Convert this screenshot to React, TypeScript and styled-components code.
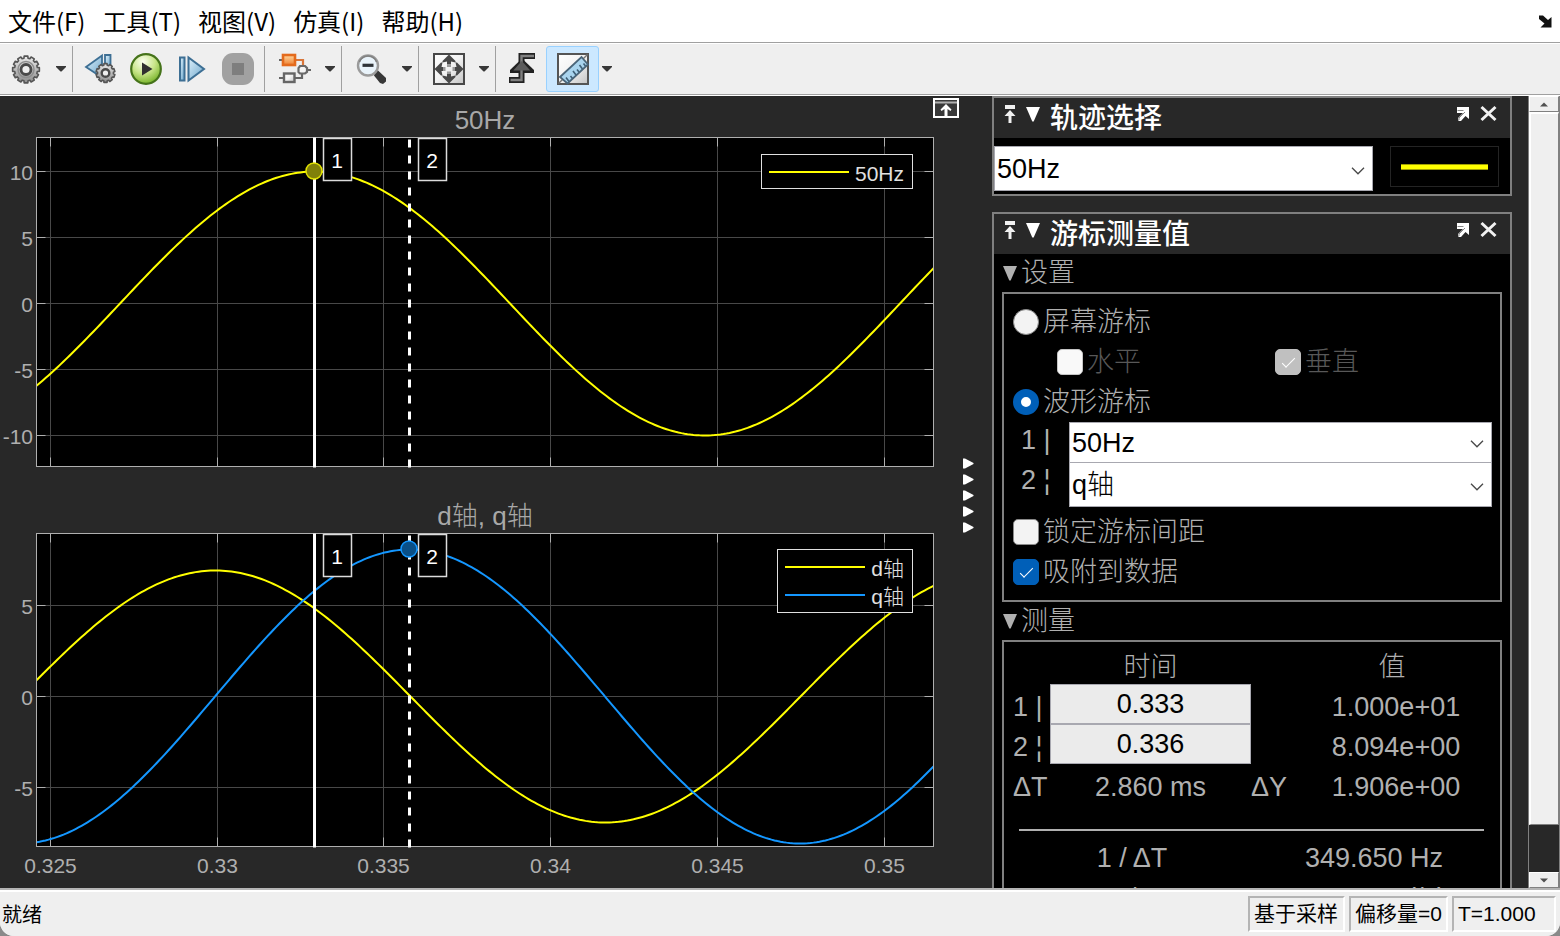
import React from 'react';
import styled, { createGlobalStyle, css } from 'styled-components';

const GlobalStyle = createGlobalStyle`
  *, *::before, *::after { box-sizing: border-box; }
  body { margin: 0; background: #8a8a8a; }
  button, input, select { font: inherit; color: inherit; margin: 0; }
`;

const latin = '"Liberation Sans", "Noto Sans CJK SC", sans-serif';

/* ---------- window frame ---------- */

const Window = styled.div`
  display: flex;
  flex-direction: column;
  height: 100vh;
  overflow: hidden;
  border-radius: 0 0 14px 14px;
  background: #efefef;
  font-family: ${latin};
`;

const MenuBar = styled.nav`
  display: flex;
  align-items: center;
  gap: 17px;
  height: 42px;
  padding: 0 7px 0 8px;
  background: #fff;
  color: #000;
  font-family: "Noto Sans CJK SC", sans-serif;
  font-size: 24px;
  line-height: 40px;
`;

const MenuItem = styled.button`
  border: 0;
  padding: 0;
  background: none;
  white-space: nowrap;
`;

const DockButton = styled(MenuItem)`
  display: flex;
  margin-left: auto;
`;

const Toolbar = styled.div`
  display: flex;
  align-items: center;
  height: 54px;
  border-top: 1px solid #a0a0a0;
  border-bottom: 1px solid #fff;
  box-shadow: inset 0 1px #fff, inset 0 -1px #a0a0a0;
  background: #efefef;
`;

const ToolGroup = styled.div<{ $kind?: 'first' | 'wide' | 'last' }>`
  display: flex;
  align-items: center;
  height: 46px;
  padding: 0 0 0 7px;
  border-left: 1px solid #a0a0a0;
  ${p => p.$kind === 'first' && css`padding: 0 0 0 3px; border-left: 0;`}
  ${p => p.$kind === 'wide' && css`padding: 0 3px 0 4px;`}
  ${p => p.$kind === 'last' && css`padding: 0 0 0 4px;`}
`;

const ToolButton = styled.button<{ $active?: boolean }>`
  display: flex;
  align-items: center;
  justify-content: center;
  width: 46px;
  height: 46px;
  border: 0;
  padding: 0;
  background: none;
  ${p => p.$active && css`
    width: 53px;
    border: 1px solid #99d1ff;
    border-radius: 3px;
    background: #cce8ff;
  `}
`;

const CaretButton = styled.button<{ $narrow?: boolean }>`
  display: flex;
  align-items: center;
  justify-content: center;
  width: ${p => (p.$narrow ? 16 : 23)}px;
  height: 46px;
  border: 0;
  padding: 0;
  background: none;
`;

const Body = styled.main`
  display: flex;
  flex: 1;
  min-height: 0;
  background: #282828;
`;

const StatusBar = styled.footer`
  display: flex;
  align-items: center;
  justify-content: space-between;
  height: 48px;
  padding: 0 4px 0 2px;
  border-top: 2px solid #b4b4b4;
  box-shadow: inset 0 2px #fff;
  background: #efefef;
  color: #000;
  font-size: 20px;
`;

const StatusCells = styled.div`
  display: flex;
  gap: 4px;
  padding-top: 2px;
`;

const StatusCell = styled.span<{ $width: number }>`
  width: ${p => p.$width}px;
  height: 36px;
  padding-left: 4px;
  border: 2px solid;
  border-color: #b4b4b4 #fff #fff #b4b4b4;
  font-size: 21px;
  line-height: 32px;
  white-space: nowrap;
`;

/* ---------- scope display ---------- */

const Scope = styled.section`
  position: relative;
  display: flex;
  flex: 1;
  min-width: 0;
`;

const Plots = styled.svg`
  display: block;
  flex: 1;
  min-width: 0;
  width: 100%;
  height: 100%;
`;

const MaximizeButton = styled.button`
  position: absolute;
  top: 2px;
  right: 33px;
  display: flex;
  border: 0;
  padding: 0;
  background: none;
`;

const Splitter = styled.button`
  display: flex;
  flex-direction: column;
  justify-content: center;
  gap: 5px;
  width: 30px;
  padding: 6px 0 0 1px;
  border: 0;
  background: none;
`;

/* ---------- side dock ---------- */

const Dock = styled.aside`
  display: flex;
  flex-direction: column;
  gap: 16px;
  width: 520px;
  overflow: hidden;
  color: #b0b0b0;
  font-size: 27px;
`;

const Panel = styled.section`
  flex-shrink: 0;
  border: 2px solid #808080;
  background: #000;
`;

const PanelHeader = styled.header`
  display: flex;
  align-items: flex-start;
  gap: 10px;
  height: 40px;
  padding: 0 13px 0 10px;
  background: #282828;
`;

const PanelTitle = styled.h2`
  flex: 1;
  margin: 0;
  color: #fff;
  font-size: 28px;
  font-weight: 500;
  line-height: 42px;
`;

const IconButton = styled.button`
  display: flex;
  border: 0;
  padding: 6px 0 0;
  background: none;
`;

const WindowButtons = styled.div`
  display: flex;
  gap: 10px;
`;

const TraceRow = styled.div`
  display: flex;
  align-items: flex-start;
  gap: 17px;
  height: 56px;
  padding: 8px 11px 0 0;
`;

const SelectBox = styled.div`
  position: relative;
  flex: 1;
  min-width: 0;
  svg { position: absolute; right: 8px; top: 50%; margin-top: -2px; pointer-events: none; }
`;

const Select = styled.select<{ $height: number; $joined?: boolean }>`
  display: block;
  appearance: none;
  width: 100%;
  height: ${p => p.$height}px;
  padding: 0 30px 0 2px;
  border: 1px solid #a8a8b0;
  border-radius: 0;
  background: #fff;
  color: #000;
  font-weight: 300;
  ${p => p.$joined && css`border-bottom: 0;`}
`;

const Swatch = styled.div`
  display: flex;
  align-items: center;
  justify-content: center;
  width: 109px;
  height: 41px;
  border: 1px solid #242424;
  &::before { content: ''; width: 87px; height: 6px; border: solid #a0a000; border-width: 1px 0; background: #ff0; }
`;

const Section = styled.section`
  padding: 0 8px;
`;

const SectionTitle = styled.h3`
  display: flex;
  align-items: center;
  gap: 4px;
  height: 38px;
  margin: 0;
  padding-left: 1px;
  font-size: 27px;
  font-weight: 300;
  line-height: 38px;
`;

const Group = styled.div`
  padding: 8px 8px 8px 9px;
  border: 2px solid #808080;
`;

const OptionRow = styled.div<{ $indent?: boolean }>`
  display: flex;
  height: 40px;
  ${p => p.$indent && css`padding-left: 44px; color: #585858;`}
`;

const Option = styled.label<{ $width?: number }>`
  display: flex;
  align-items: center;
  gap: 4px;
  font-weight: 300;
  line-height: 40px;
  ${p => p.$width && css`width: ${p.$width}px;`}
`;

const Radio = styled.input.attrs({ type: 'radio' })`
  appearance: none;
  width: 26px;
  height: 26px;
  border: 1px solid #8a8a8a;
  border-radius: 50%;
  background: #f3f3f3;
  &:checked { border: 8px solid #005fb8; background: #fff; }
`;

const Tick = styled.input.attrs({ type: 'checkbox' })`
  appearance: none;
  position: relative;
  width: 26px;
  height: 26px;
  border: 1px solid #8a8a8a;
  border-radius: 5px;
  background: #f3f3f3;
  &:disabled { border-color: #c5c5c5; background: #f9f9f9; }
  &:checked { border-color: #005fb8; background: #005fb8; }
  &:checked:disabled { border-color: #c0c0c0; background: #c0c0c0; }
  &:checked::after {
    content: '';
    position: absolute;
    left: 6px;
    top: 8px;
    width: 13px;
    height: 6px;
    border: solid #fff;
    border-width: 0 0 1px 1px;
    transform: rotate(-45deg);
  }
`;

const CursorRow = styled.div<{ $height: number }>`
  display: flex;
  align-items: flex-start;
  height: ${p => p.$height}px;
  padding-left: 8px;
`;

const CursorLabel = styled.label`
  width: 48px;
  line-height: 36px;
  white-space: pre;
`;

const Readings = styled.table`
  width: 100%;
  border-collapse: collapse;
  table-layout: fixed;
  font-size: 27px;
  line-height: 40px;
  th, td { height: 40px; padding: 0; text-align: center; font-weight: 400; white-space: nowrap; }
  thead th { height: 34px; line-height: 34px; font-weight: 300; }
  thead th:last-child { padding-right: 11px; }
`;

const RowHead = styled.th.attrs({ scope: 'row' })<{ $low?: boolean }>`
  && { text-align: left; }
  ${p => p.$low && css`&& { padding-top: 6px; line-height: 34px; }`}
`;

const Reading = styled.td<{ $low?: boolean }>`
  && { padding-right: 3px; }
  ${p => p.$low && css`&& { padding-top: 6px; line-height: 34px; }`}
`;

const TimeInput = styled.input`
  display: block;
  width: 100%;
  height: 40px;
  padding: 0;
  border: 1px solid #a8a8b0;
  border-radius: 0;
  background: #ebebeb;
  color: #000;
  text-align: center;
`;

const DeltaRow = styled.tr`
  && th, && td { height: 42px; padding-top: 4px; line-height: 38px; }
`;

const RuleCell = styled.td`
  && { height: 32px; padding-top: 16px; }
  &::before { content: ''; display: block; height: 2px; margin: 0 8px 0 6px; background: #b0b0b0; }
`;

const RateValue = styled.td`
  && { padding-left: 5px; }
`;

/* ---------- scrollbar ---------- */

const ScrollBar = styled.div`
  display: flex;
  flex-direction: column;
  width: 32px;
  margin-left: 16px;
  border: solid #808080;
  border-width: 0 1px;
`;

const ScrollStep = styled.button`
  display: flex;
  align-items: center;
  justify-content: center;
  height: 16px;
  padding: 0;
  border: 1px solid;
  border-color: #fff #808080 #808080 #fff;
  background: #efefef;
`;

const ScrollThumb = styled.div`
  flex: 1;
  margin-bottom: 47px;
  border: solid;
  border-width: 2px 1px 1px 2px;
  border-color: #fff #808080 #808080 #fff;
  background: #efefef;
`;

/* ---------- icons ---------- */

const gearPath = (cx: number, cy: number, outer: number, inner: number, teeth: number) => {
  const pts: string[] = [];
  for (let i = 0; i < teeth; i++) {
    const a = (i / teeth) * Math.PI * 2;
    const s = (Math.PI * 2) / teeth;
    [[-0.34, inner], [-0.26, outer], [0.26, outer], [0.34, inner]].forEach(([k, r]) => {
      pts.push(`${(cx + Math.sin(a + k * s) * r).toFixed(2)} ${(cy - Math.cos(a + k * s) * r).toFixed(2)}`);
    });
  }
  return `M${pts.join('L')}Z`;
};

const Gradients = () => (
  <defs>
    <linearGradient id="steel" x1="0" y1="0" x2="0" y2="1">
      <stop offset="0" stopColor="#ececec" /><stop offset="1" stopColor="#8c8c8c" />
    </linearGradient>
    <linearGradient id="sky" x1="0" y1="0" x2="1" y2="1">
      <stop offset="0" stopColor="#dff1fb" /><stop offset="1" stopColor="#6aa5cb" />
    </linearGradient>
    <radialGradient id="leaf" cx="0.4" cy="0.25" r="0.8">
      <stop offset="0" stopColor="#fbfff0" /><stop offset="0.5" stopColor="#c9e68a" /><stop offset="1" stopColor="#6fae1f" />
    </radialGradient>
    <linearGradient id="page" x1="0" y1="0" x2="1" y2="1">
      <stop offset="0" stopColor="#fff" /><stop offset="0.5" stopColor="#f2f2f2" /><stop offset="1" stopColor="#c4c4c4" />
    </linearGradient>
    <linearGradient id="ember" x1="0" y1="0" x2="0" y2="1">
      <stop offset="0" stopColor="#ffd9a0" /><stop offset="1" stopColor="#ee7f30" />
    </linearGradient>
  </defs>
);

const SharedDefs = styled.svg`
  position: absolute;
  width: 0;
  height: 0;
`;

const Icon = ({ children, size = 32 }: { children: React.ReactNode; size?: number }) => (
  <svg width={size} height={size} viewBox={`0 0 ${size} ${size}`} aria-hidden="true">{children}</svg>
);

const GearIcon = () => (
  <Icon>
    <path d={gearPath(16, 16.5, 13.5, 11.5, 12)} fill="url(#steel)" stroke="#555" strokeWidth="1.6" strokeLinejoin="round" />
    <circle cx="16" cy="16.500" r="8" fill="none" stroke="#8e8e8e" strokeWidth="1.500" />
    <circle cx="16" cy="16.500" r="5" fill="#efefef" stroke="#4a4a4a" strokeWidth="2.800" />
  </Icon>
);

const StepBackIcon = () => (
  <Icon>
    <path d="M2 14 18 2.500v22Z" fill="url(#sky)" stroke="#3d6f94" strokeWidth="1.8" />
    <path d="M21 2h5.500V16H21Z" fill="url(#sky)" stroke="#3d6f94" strokeWidth="1.8" />
    <path d={gearPath(21.5, 20, 9.5, 8, 10)} fill="url(#steel)" stroke="#555" strokeWidth="1.6" strokeLinejoin="round" />
    <circle cx="21.500" cy="20" r="3.8" fill="#efefef" stroke="#4a4a4a" strokeWidth="2.4" />
  </Icon>
);

const PlayIcon = () => (
  <Icon>
    <circle cx="16" cy="16" r="14.8" fill="url(#leaf)" stroke="#45731a" strokeWidth="2.2" />
    <path d="M12 9.500v13L22.500 16Z" fill="#303030" />
  </Icon>
);

const StepForwardIcon = () => (
  <Icon>
    <path d="M4 4.500h4.500v23H4Z" fill="url(#sky)" stroke="#3d6f94" strokeWidth="2" />
    <path d="M12.500 4.500v23L28 16Z" fill="url(#sky)" stroke="#3d6f94" strokeWidth="2" />
  </Icon>
);

const StopIcon = () => (
  <Icon>
    <rect x="0" y="0" width="32" height="32" rx="11" fill="#a1a1a1" />
    <path d="M10 10h12v12H10Z" fill="#7e7e7e" />
  </Icon>
);

const BlocksIcon = () => (
  <Icon>
    <path d="M0 7h5M0 25h5M16 25h7v-7M26 17h6" fill="none" stroke="#666" strokeWidth="2.200" />
    <path d="M16 7h8v7" fill="none" stroke="#d9763a" strokeWidth="2.200" />
    <rect x="4" y="2" width="12" height="10" fill="url(#ember)" stroke="#e46a1c" strokeWidth="2.600" />
    <rect x="5" y="20.500" width="10.500" height="8.500" fill="url(#page)" stroke="#666" strokeWidth="2.400" />
    <path d="M21 13h5l2 2v4l-2 1.500h-5L19.500 19v-4Z" fill="#f4f4f4" stroke="#6a6a6a" strokeWidth="2.200" />
  </Icon>
);

const ZoomOutIcon = () => (
  <Icon>
    <path d="m19 19 2.500-2 8.500 8v3.500l-3 2.500-3-1-6-7.500Z" fill="#383838" />
    <circle cx="12" cy="12.500" r="10" fill="#e9f3fa" stroke="#9b9b9b" strokeWidth="2.400" />
    <path d="M3.500 9a9 9 0 0 1 17 0" fill="none" stroke="#808080" strokeWidth="1.500" />
    <path d="M6.500 10.700h11v3.200h-11Z" fill="#2e3338" />
  </Icon>
);

const FitIcon = () => (
  <Icon>
    <rect x="1" y="1" width="30" height="30" fill="url(#page)" stroke="#484848" strokeWidth="2" />
    <path d="M16 1.500 9.500 8v1.500L14 8.500v3h4v-3l4.500 1V8ZM16 30.500 9.500 24v-1.500l4.500 1v-3h4v3l4.500-1V24ZM1.500 16 8 9.500h1.500L8.500 14h2v4h-2l1 4.500H8ZM30.500 16 24 9.500h-1.500l1 4.500h-2v4h2l-1 4.500H24Z" fill="#484848" />
    <path d="M14 12h4v2h-4ZM14 18.500h4v2h-4ZM10.500 14h2v4h-2ZM19.500 14h2v4h-2Z" fill="#9a9a9a" />
  </Icon>
);

const TriggerIcon = () => (
  <Icon>
    <path d="M2 27h12.500V3H28" fill="none" stroke="#222" strokeWidth="6" />
    <path d="m15 5.500-12 11.500v3h24v-3Z" fill="#222" />
    <path d="M3.500 27h11V3H27" fill="none" stroke="#808080" strokeWidth="2.400" />
    <path d="m14.800 8-8.500 9.500h17Z" fill="#5c5c5c" />
  </Icon>
);

const RulerIcon = () => (
  <Icon>
    <rect x="1" y="1" width="30" height="30" fill="url(#page)" stroke="#555" strokeWidth="2" />
    <path d="M1.500 30.500 30.500 1.500" stroke="#777" strokeWidth="1.500" />
    <path d="M3 24 24.500 4l6.500 7.500L10.500 30.500Z" fill="#a9d4ee" stroke="#4a6579" strokeWidth="1.800" />
    <path d="m12 28.500-3-4M15.500 25.500l-2-2.500M19 22l-3-4M22 19l-2-2.500M25.500 16l-3-4M28.500 13l-2-2.500" stroke="#3f6078" strokeWidth="1.600" />
  </Icon>
);

const Caret = () => (
  <svg width="10" height="6" viewBox="0 0 10 6" aria-hidden="true"><path d="M0 0h10v1L5.500 5.500h-1L0 1Z" fill="#383838" /></svg>
);

const Chevron = () => (
  <svg width="14" height="8" viewBox="0 0 14 8" aria-hidden="true">
    <path d="M1 .8 7 6.800 13 .8" fill="none" stroke="#484848" strokeWidth="1.300" />
  </svg>
);

const PinIcon = () => (
  <svg width="12" height="20" viewBox="0 0 12 20" aria-hidden="true">
    <path d="M1 1h10v4H1ZM6 6l5.500 6H7.500v7h-3v-7H.5Z" fill="#f0f0f0" />
  </svg>
);

const Triangle = ({ fill }: { fill: string }) => (
  <svg width="14" height="15" viewBox="0 0 14 15" aria-hidden="true"><path d="M0 0h14L7.700 14.500H6.300Z" fill={fill} /></svg>
);

const CollapseIcon = () => (
  <svg width="14" height="20" viewBox="0 0 14 20" aria-hidden="true"><path d="M0 3h14L7.700 17.500H6.300Z" fill="#fff" /></svg>
);

const UndockIcon = () => (
  <svg width="14" height="20" viewBox="0 0 14 20" aria-hidden="true">
    <path d="M1 3h12v12l-3.500-3-4.500 5H2.500l-.5-3 5-5H1Z" fill="#fff" />
    <path d="M1.500 6.500h6M9 8l-6 6v2" stroke="#888" fill="none" />
  </svg>
);

const CloseIcon = () => (
  <svg width="17" height="20" viewBox="0 0 17 20" aria-hidden="true">
    <path d="m1.500 3 14 13M15.500 3l-14 13" stroke="#f2f2f2" strokeWidth="3" />
  </svg>
);

/* ---------- plots ---------- */

const LEFT = 36.5;
const RIGHT = 933.5;
const HALF_PERIOD = 390;
const Y = '#ffff00';
const B = '#1497ff';

const xTicks = [
  { x: 50.5, label: '0.325' },
  { x: 217.5, label: '0.33' },
  { x: 383.5, label: '0.335' },
  { x: 550.5, label: '0.34' },
  { x: 717.5, label: '0.345' },
  { x: 884.5, label: '0.35' },
];

const wave = (zeroX: number, zeroY: number, amp: number) => {
  const pts: string[] = [];
  for (let x = LEFT; x <= RIGHT; x += 3) {
    pts.push(`${x},${(zeroY - amp * Math.sin((Math.PI * (x - zeroX)) / HALF_PERIOD)).toFixed(2)}`);
  }
  return pts.join(' ');
};

interface Trace { name: string; color: string; zeroX: number; amp: number }
interface PlotProps {
  title: string;
  top: number;
  bottom: number;
  zero: number;
  yTicks: { y: number; label: string }[];
  traces: Trace[];
  legend: { x: number; y: number; w: number; h: number };
  marker: { x: number; y: number; fill: string; stroke: string };
}

const Plot = ({ title, top, bottom, zero, yTicks, traces, legend, marker }: PlotProps) => (
  <g fontFamily='"Liberation Sans", "Noto Sans CJK SC", sans-serif' fontSize="21">
    <text x="485" y={top - 9} fontSize="26" fontWeight="300" textAnchor="middle" fill="#a8a8a8">{title}</text>
    <rect x={LEFT} y={top} width={RIGHT - LEFT} height={bottom - top} fill="#000" />
    {xTicks.map(t => (
      <g key={t.x}>
        <path d={`M${t.x} ${top}V${bottom}`} stroke="#484848" />
        <path d={`M${t.x} ${top}v9M${t.x} ${bottom}v-9`} stroke="#afafaf" />
      </g>
    ))}
    {yTicks.map(t => (
      <g key={t.y}>
        <path d={`M${LEFT} ${t.y}H${RIGHT}`} stroke="#484848" />
        <path d={`M${LEFT} ${t.y}h9M${RIGHT} ${t.y}h-9`} stroke="#afafaf" />
        <text x="33" y={t.y + 8} textAnchor="end" fill="#afafaf">{t.label}</text>
      </g>
    ))}
    {traces.map(t => (
      <polyline key={t.name} points={wave(t.zeroX, zero, t.amp)} fill="none" stroke={t.color} strokeWidth="2" />
    ))}
    <rect x={LEFT} y={top} width={RIGHT - LEFT} height={bottom - top} fill="none" stroke="#afafaf" />
    <path d={`M314.500 ${top}V${bottom + 1}`} stroke="#fff" strokeWidth="3" />
    <path d={`M409.500 ${top + 2}V${bottom + 1}`} stroke="#fff" strokeWidth="3" strokeDasharray="8 8" />
    {[{ x: 323, n: '1' }, { x: 418, n: '2' }].map(c => (
      <g key={c.n}>
        <rect x={c.x + 0.5} y={top + 1} width="28" height="42" fill="#000" stroke="#dcdcdc" strokeWidth="1.500" />
        <text x={c.x + 14} y={top + 30} textAnchor="middle" fill="#fff">{c.n}</text>
      </g>
    ))}
    <circle cx={marker.x} cy={marker.y} r="8" fill={marker.fill} stroke={marker.stroke} strokeWidth="1.500" />
    <rect x={legend.x + 0.5} y={legend.y + 0.5} width={legend.w} height={legend.h} fill="#000" stroke="#e0e0e0" />
    {traces.map((t, i) => (
      <g key={t.name}>
        <path d={`M${legend.x + 8} ${legend.y + 18 + i * 28}h80`} stroke={t.color} strokeWidth="2" />
        <text x="904" y={legend.y + 27 + i * 28} textAnchor="end" fontWeight="300" fill="#e0e0e0">{t.name}</text>
      </g>
    ))}
  </g>
);

/* ---------- composed parts ---------- */

const PanelBar = ({ title }: { title: string }) => (
  <PanelHeader>
    <IconButton aria-label="固定"><PinIcon /></IconButton>
    <IconButton aria-label="折叠"><CollapseIcon /></IconButton>
    <PanelTitle>{title}</PanelTitle>
    <WindowButtons>
      <IconButton aria-label="取消停靠"><UndockIcon /></IconButton>
      <IconButton aria-label="关闭"><CloseIcon /></IconButton>
    </WindowButtons>
  </PanelHeader>
);

const SignalSelect = ({ id, label, value, height, joined }: {
  id: string; label?: string; value: string; height: number; joined?: boolean;
}) => (
  <SelectBox>
    <Select id={id} aria-label={label} defaultValue={value} $height={height} $joined={joined}>
      <option>50Hz</option>
      <option>d轴</option>
      <option>q轴</option>
    </Select>
    <Chevron />
  </SelectBox>
);

export default function App() {
  return (
    <Window>
      <GlobalStyle />
      <SharedDefs aria-hidden="true"><Gradients /></SharedDefs>
      <MenuBar>
        {['文件(F)', '工具(T)', '视图(V)', '仿真(I)', '帮助(H)'].map(m => <MenuItem key={m}>{m}</MenuItem>)}
        <DockButton aria-label="停靠">
          <svg width="14" height="14" viewBox="0 0 14 14"><path d="M0 1.500h4l5 4.500L12.500 3v10.500h-11L5.500 9.500 0 5Z" fill="#111" /></svg>
        </DockButton>
      </MenuBar>
      <Toolbar role="toolbar">
        <ToolGroup $kind="first">
          <ToolButton aria-label="配置属性"><GearIcon /></ToolButton>
          <CaretButton aria-label="更多配置"><Caret /></CaretButton>
        </ToolGroup>
        <ToolGroup $kind="wide">
          <ToolButton aria-label="步退选项"><StepBackIcon /></ToolButton>
          <ToolButton aria-label="运行"><PlayIcon /></ToolButton>
          <ToolButton aria-label="步进"><StepForwardIcon /></ToolButton>
          <ToolButton aria-label="停止" disabled><StopIcon /></ToolButton>
        </ToolGroup>
        <ToolGroup>
          <ToolButton aria-label="突出显示模块"><BlocksIcon /></ToolButton>
          <CaretButton aria-label="更多模块选项"><Caret /></CaretButton>
        </ToolGroup>
        <ToolGroup>
          <ToolButton aria-label="缩小"><ZoomOutIcon /></ToolButton>
          <CaretButton aria-label="更多缩放"><Caret /></CaretButton>
        </ToolGroup>
        <ToolGroup>
          <ToolButton aria-label="缩放以适应"><FitIcon /></ToolButton>
          <CaretButton aria-label="更多适应选项"><Caret /></CaretButton>
        </ToolGroup>
        <ToolGroup $kind="last">
          <ToolButton aria-label="触发器"><TriggerIcon /></ToolButton>
          <ToolButton $active aria-label="游标测量值"><RulerIcon /></ToolButton>
          <CaretButton $narrow aria-label="更多测量"><Caret /></CaretButton>
        </ToolGroup>
      </Toolbar>
      <Body>
        <Scope>
          <Plots viewBox="0 0 962 792" role="img" aria-label="示波器波形">
            <Plot
              title="50Hz" top={41.5} bottom={370.5} zero={207.5}
              yTicks={[{ y: 75.5, label: '10' }, { y: 141.5, label: '5' }, { y: 207.5, label: '0' }, { y: 273.5, label: '-5' }, { y: 339.5, label: '-10' }]}
              traces={[{ name: '50Hz', color: Y, zeroX: 120, amp: 132 }]}
              legend={{ x: 761, y: 58, w: 151, h: 34 }}
              marker={{ x: 314, y: 75, fill: '#80800a', stroke: '#e0e000' }}
            />
            <Plot
              title="d轴, q轴" top={437.5} bottom={750.5} zero={600.5}
              yTicks={[{ y: 509.5, label: '5' }, { y: 600.5, label: '0' }, { y: 691.5, label: '-5' }]}
              traces={[
                { name: 'd轴', color: Y, zeroX: 20.5, amp: 126 },
                { name: 'q轴', color: B, zeroX: 215, amp: 147 },
              ]}
              legend={{ x: 777, y: 453, w: 135, h: 63 }}
              marker={{ x: 409, y: 453, fill: '#0a4f86', stroke: B }}
            />
            <g fontFamily='"Liberation Sans", sans-serif' fontSize="21" fill="#afafaf" textAnchor="middle">
              {xTicks.map(t => <text key={t.x} x={t.x} y="777">{t.label}</text>)}
            </g>
          </Plots>
          <Splitter aria-label="收起面板">
            {[0, 1, 2, 3, 4].map(i => (
              <svg key={i} width="11" height="11" viewBox="0 0 11 11"><path d="M0 .5h2l8.500 4.500v1L2 10.500H0Z" fill="#fff" /></svg>
            ))}
          </Splitter>
          <MaximizeButton aria-label="最大化坐标区">
            <svg width="26" height="20" viewBox="0 0 26 20">
              <rect x="1" y="1" width="24" height="18" fill="#383838" stroke="#fff" strokeWidth="2" />
              <path d="M2 4.500h22" stroke="#b0b0b0" strokeWidth="2" />
              <path d="M13 6 7.500 11.500l1 1.500 3-2v7h3v-7l3 2 1-1.500Z" fill="#fff" />
            </svg>
          </MaximizeButton>
        </Scope>
        <Dock>
          <Panel>
            <PanelBar title="轨迹选择" />
            <TraceRow>
              <SignalSelect id="trace" label="轨迹" value="50Hz" height={45} />
              <Swatch />
            </TraceRow>
          </Panel>
          <Panel>
            <PanelBar title="游标测量值" />
            <Section>
              <SectionTitle><Triangle fill="#b0b0b0" />设置</SectionTitle>
              <Group>
                <OptionRow><Option><Radio name="cursor" />屏幕游标</Option></OptionRow>
                <OptionRow $indent>
                  <Option $width={218}><Tick disabled />水平</Option>
                  <Option><Tick disabled defaultChecked />垂直</Option>
                </OptionRow>
                <OptionRow><Option><Radio name="cursor" defaultChecked />波形游标</Option></OptionRow>
                <CursorRow $height={40}>
                  <CursorLabel htmlFor="cursor1">1 |</CursorLabel>
                  <SignalSelect id="cursor1" value="50Hz" height={40} joined />
                </CursorRow>
                <CursorRow $height={50}>
                  <CursorLabel htmlFor="cursor2">2 ¦</CursorLabel>
                  <SignalSelect id="cursor2" value="q轴" height={45} />
                </CursorRow>
                <OptionRow><Option><Tick />锁定游标间距</Option></OptionRow>
                <OptionRow><Option><Tick defaultChecked />吸附到数据</Option></OptionRow>
              </Group>
            </Section>
            <Section>
              <SectionTitle><Triangle fill="#b0b0b0" />测量</SectionTitle>
              <Group>
                <Readings>
                  <colgroup>
                    <col style={{ width: 37 }} /><col style={{ width: 201 }} /><col style={{ width: 52 }} /><col />
                  </colgroup>
                  <thead><tr><th /><th scope="col">时间</th><th /><th scope="col">值</th></tr></thead>
                  <tbody>
                    <tr>
                      <RowHead $low><label htmlFor="t1">1 |</label></RowHead>
                      <td><TimeInput id="t1" defaultValue="0.333" /></td><td />
                      <Reading $low>1.000e+01</Reading>
                    </tr>
                    <tr>
                      <RowHead $low><label htmlFor="t2">2 ¦</label></RowHead>
                      <td><TimeInput id="t2" defaultValue="0.336" /></td><td />
                      <Reading $low>8.094e+00</Reading>
                    </tr>
                    <DeltaRow><RowHead>ΔT</RowHead><td>2.860 ms</td><RowHead>ΔY</RowHead><Reading>1.906e+00</Reading></DeltaRow>
                    <tr><RuleCell colSpan={4} /></tr>
                    <tr><th scope="row" colSpan={2}>1 / ΔT</th><RateValue colSpan={2}>349.650 Hz</RateValue></tr>
                    <tr><th scope="row" colSpan={2}>ΔY / ΔT</th><RateValue colSpan={2}>666.343 (/s)</RateValue></tr>
                  </tbody>
                </Readings>
              </Group>
            </Section>
          </Panel>
        </Dock>
        <ScrollBar>
          <ScrollStep aria-label="向上滚动"><svg width="8" height="5" viewBox="0 0 8 5"><path d="M0 4.500h8L4 .5Z" fill="#505050" /></svg></ScrollStep>
          <ScrollThumb />
          <ScrollStep aria-label="向下滚动"><svg width="8" height="5" viewBox="0 0 8 5"><path d="M0 .5h8L4 4.500Z" fill="#505050" /></svg></ScrollStep>
        </ScrollBar>
      </Body>
      <StatusBar>
        <span>就绪</span>
        <StatusCells>
          <StatusCell $width={97}>基于采样</StatusCell>
          <StatusCell $width={99}>偏移量=0</StatusCell>
          <StatusCell $width={104}>T=1.000</StatusCell>
        </StatusCells>
      </StatusBar>
    </Window>
  );
}
